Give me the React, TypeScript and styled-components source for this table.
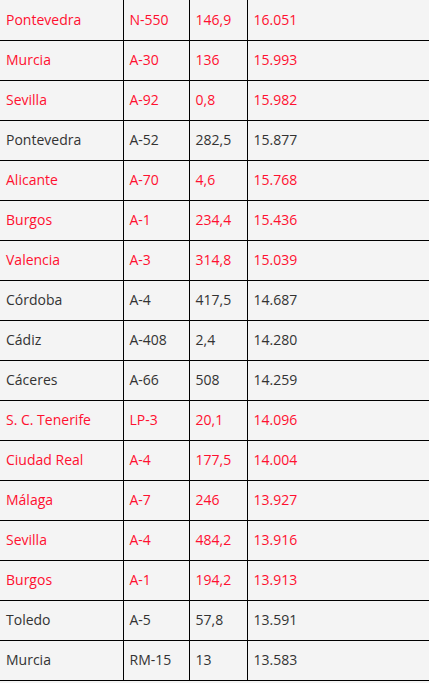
import React from 'react';
import styled, { createGlobalStyle } from 'styled-components';

const GlobalStyle = createGlobalStyle`
  html, body {
    margin: 0;
    padding: 0;
    background: #f4f4f4;
  }
  body {
    font-family: "Open Sans", "Liberation Sans", sans-serif;
  }
`;

const Table = styled.table`
  width: 100%;
  table-layout: fixed;
  border-collapse: collapse;
  font-size: 14px;
  background: #f4f4f4;
`;

const Col = styled.col<{ size?: number }>`
  width: ${({ size }) => (size ? `${size}px` : 'auto')};
`;

const Row = styled.tr<{ highlight: boolean }>`
  height: 40px;
  color: ${({ highlight }) => (highlight ? '#ff1030' : '#333333')};
`;

const Cell = styled.td<{ last?: boolean }>`
  padding: 0 0 1px 6px;
  border-bottom: 1px solid #000;
  border-right: ${({ last }) => (last ? 'none' : '1px solid #000')};
  vertical-align: middle;
  white-space: nowrap;
  overflow: hidden;
`;

interface Entry {
  province: string;
  road: string;
  km: string;
  imd: string;
  red: boolean;
}

const rows: Entry[] = [
  { province: 'Pontevedra', road: 'N-550', km: '146,9', imd: '16.051', red: true },
  { province: 'Murcia', road: 'A-30', km: '136', imd: '15.993', red: true },
  { province: 'Sevilla', road: 'A-92', km: '0,8', imd: '15.982', red: true },
  { province: 'Pontevedra', road: 'A-52', km: '282,5', imd: '15.877', red: false },
  { province: 'Alicante', road: 'A-70', km: '4,6', imd: '15.768', red: true },
  { province: 'Burgos', road: 'A-1', km: '234,4', imd: '15.436', red: true },
  { province: 'Valencia', road: 'A-3', km: '314,8', imd: '15.039', red: true },
  { province: 'Córdoba', road: 'A-4', km: '417,5', imd: '14.687', red: false },
  { province: 'Cádiz', road: 'A-408', km: '2,4', imd: '14.280', red: false },
  { province: 'Cáceres', road: 'A-66', km: '508', imd: '14.259', red: false },
  { province: 'S. C. Tenerife', road: 'LP-3', km: '20,1', imd: '14.096', red: true },
  { province: 'Ciudad Real', road: 'A-4', km: '177,5', imd: '14.004', red: true },
  { province: 'Málaga', road: 'A-7', km: '246', imd: '13.927', red: true },
  { province: 'Sevilla', road: 'A-4', km: '484,2', imd: '13.916', red: true },
  { province: 'Burgos', road: 'A-1', km: '194,2', imd: '13.913', red: true },
  { province: 'Toledo', road: 'A-5', km: '57,8', imd: '13.591', red: false },
  { province: 'Murcia', road: 'RM-15', km: '13', imd: '13.583', red: false },
];

const App: React.FC = () => {
  return (
    <>
      <GlobalStyle />
      <Table>
        <colgroup>
          <Col size={123} />
          <Col size={66} />
          <Col size={58} />
          <Col />
        </colgroup>
        <tbody>
          {rows.map((r, i) => (
            <Row key={i} highlight={r.red}>
              <Cell>{r.province}</Cell>
              <Cell>{r.road}</Cell>
              <Cell>{r.km}</Cell>
              <Cell last>{r.imd}</Cell>
            </Row>
          ))}
        </tbody>
      </Table>
    </>
  );
};

export default App;
